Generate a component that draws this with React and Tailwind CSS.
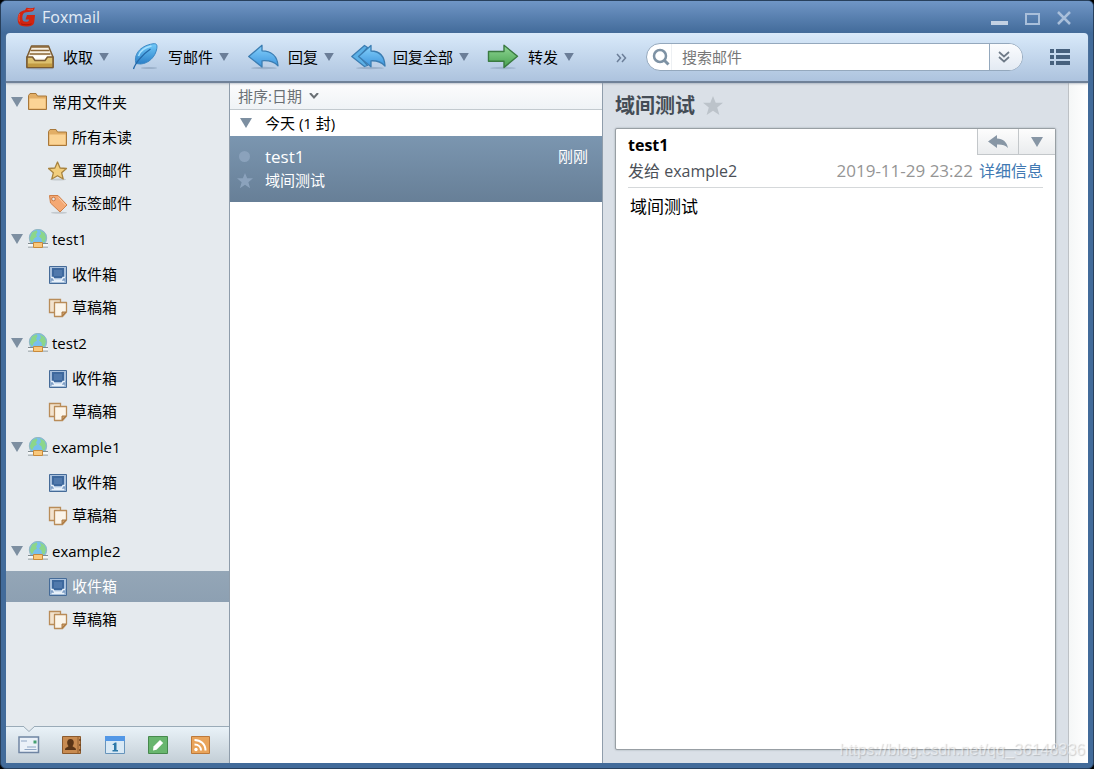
import { useState } from 'react'

const accounts = ['test1', 'test2', 'example1', 'example2']

/* ---------- small glyphs ---------- */

function Triangle({ className = '' }) {
  return (
    <svg viewBox="0 0 12 10" className={`shrink-0 ${className}`} aria-hidden="true">
      <path d="M0 0h12L6 10z" fill="currentColor" />
    </svg>
  )
}

function Star({ className = '' }) {
  return (
    <svg viewBox="0 0 20 20" className={`shrink-0 ${className}`} aria-hidden="true">
      <path d="M10 0l2.700 6.700H20l-5.800 4.900L16.400 19 10 14.800 3.600 19l2.200-7.400L0 6.700h7.300z" fill="currentColor" />
    </svg>
  )
}

function Logo() {
  return (
    <svg width="20" height="20" viewBox="0 0 20 20" className="shrink-0" aria-hidden="true">
      <path d="M18.800 .4c-.6 3-1.800 4-4.300 4.300l-4.300.5C7.200 5.600 6.300 7.500 6.300 10.800c0 3 1.200 4 3.700 4 2.200 0 3-.6 3-2.300H9.500L11 8h8l-.8 7.200c-.5 3-3.200 4.200-8.200 4.200-6 0-8.300-2-8.300-7.200C1.700 6.500 4.500 4 9 3.300l1.500-2.500c3 .6 6 .6 8.300-.4z" fill="#d2240f" />
      <path d="M3.700 7C2.700 9 2.700 12.500 3.500 14.500M11.500 2.500c2 .3 3.800.3 5.500-.3" stroke="#ec5a40" strokeWidth="1" fill="none" />
      <path d="M5 16.800c2 1.300 8 1.300 10.500 0" stroke="#a81808" fill="none" />
    </svg>
  )
}

/* ---------- toolbar icons ---------- */

function ReceiveIcon() {
  return (
    <svg width="42" height="32" viewBox="0 0 42 32" aria-hidden="true">
      <ellipse cx="19" cy="27.500" rx="14" ry="1.200" fill="#8fa5bf" opacity=".6" />
      <path d="M10.500 5h17l4.500 11v10H6V16z" fill="#f7f1e4" stroke="#7a5a30" strokeWidth="1.500" strokeLinejoin="round" />
      <path d="M10.500 6h17M9.500 9.500h19M8.500 13h21" stroke="#8a6535" strokeWidth="1.500" />
      <path d="M9.500 14.500h19l1.500 3H8z" fill="#fff" />
      <path d="M6 16h5.500l2.500 3.500h10l2.500-3.500H32v10.500H6z" fill="#dcc06e" stroke="#7a5a30" strokeWidth="1.500" strokeLinejoin="round" />
      <path d="M7 22.500h24V26H7z" fill="#c19a42" />
    </svg>
  )
}

function WriteIcon() {
  return (
    <svg width="42" height="32" viewBox="0 0 42 32" aria-hidden="true">
      <defs>
        <linearGradient id="feather" x1="0" y1="0" x2="0" y2="1">
          <stop offset="0" stopColor="#72cbfa" />
          <stop offset="1" stopColor="#2a7fc8" />
        </linearGradient>
      </defs>
      <ellipse cx="23" cy="27" rx="8" ry="1" fill="#8fa5bf" opacity=".7" />
      <path d="M10 22.500C7.500 14.500 13 5 27 2.800c3.700-.5 4.300 1 3.800 4.700C29.500 15.500 23 22.500 14.500 23z" fill="url(#feather)" stroke="#3a87c4" />
      <path d="M7.500 28c1.500-5 8-14 17-20" stroke="#2468a8" strokeWidth="1.300" fill="none" />
      <path d="M12.500 15c1.500-5 6.500-8.500 13-10" stroke="#a5e0ff" strokeWidth="1.500" fill="none" />
    </svg>
  )
}

function ReplyIcon() {
  return (
    <svg width="42" height="32" viewBox="0 0 42 32" aria-hidden="true">
      <defs>
        <linearGradient id="reply" x1="0" y1="0" x2="0" y2="1">
          <stop offset="0" stopColor="#86d2fc" />
          <stop offset="1" stopColor="#3b93dc" />
        </linearGradient>
      </defs>
      <ellipse cx="18" cy="27" rx="13" ry="1.200" fill="#8fa5bf" opacity=".7" />
      <path d="M2.700 15.500L16 4.300v5.500c9 .2 15.500 5 16 15-4-4.300-8.500-5.500-16-5v6.200z" fill="url(#reply)" stroke="#3b7db2" strokeWidth="1.300" strokeLinejoin="round" />
    </svg>
  )
}

function ReplyAllIcon() {
  return (
    <svg width="42" height="32" viewBox="0 0 42 32" aria-hidden="true">
      <ellipse cx="19" cy="27" rx="14" ry="1.200" fill="#8fa5bf" opacity=".7" />
      <path d="M.8 15.500L13.500 4.500l3 2-8 9 8 9-3 1z" fill="#5cb0e6" stroke="#3b7db2" strokeWidth="1.300" strokeLinejoin="round" />
      <path d="M7.500 15.500L20 4.500V10c8 .2 13.500 4.800 14 15-4-4.300-8-5.500-14-5.200v6z" fill="url(#reply)" stroke="#3b7db2" strokeWidth="1.300" strokeLinejoin="round" />
    </svg>
  )
}

function ForwardIcon() {
  return (
    <svg width="42" height="32" viewBox="0 0 42 32" aria-hidden="true">
      <defs>
        <linearGradient id="forward" x1="0" y1="0" x2="0" y2="1">
          <stop offset="0" stopColor="#90d795" />
          <stop offset="1" stopColor="#47a04f" />
        </linearGradient>
      </defs>
      <ellipse cx="17" cy="27" rx="13" ry="1.200" fill="#8fa5bf" opacity=".6" />
      <path d="M2.500 10.500H18V4.300l13.500 11L18 26.500v-6.200H2.500z" fill="url(#forward)" stroke="#3a7a41" strokeWidth="1.400" strokeLinejoin="round" />
    </svg>
  )
}

/* ---------- folder icons ---------- */

function FolderIcon() {
  return (
    <svg width="20" height="20" viewBox="0 0 20 20" className="shrink-0" aria-hidden="true">
      <path d="M.5 17.500v-14L2 1.500h6L9.500 4h9v13.500z" fill="#e2ae66" stroke="#a8783a" strokeLinejoin="round" />
      <path d="M1.500 6.500h16v10h-16z" fill="#fbd495" />
    </svg>
  )
}

function PinnedIcon() {
  return (
    <svg width="20" height="20" viewBox="0 0 20 20" className="shrink-0" aria-hidden="true">
      <ellipse cx="10" cy="18.500" rx="8" ry="1" fill="#c3c9ce" />
      <path d="M9.500 1l2.600 6 6.400.5-4.900 4.200 1.600 6.300-5.700-3.300L3.800 18l1.600-6.300L.5 7.500 6.900 7z" fill="#f2ce7d" stroke="#a9843f" strokeWidth="1.300" strokeLinejoin="round" />
    </svg>
  )
}

function TagIcon() {
  return (
    <svg width="20" height="20" viewBox="0 0 20 20" className="shrink-0" aria-hidden="true">
      <ellipse cx="11" cy="18.800" rx="8" ry="1" fill="#c3c9ce" />
      <path d="M1.500 1.500h8.500l9 9.500-7 7L2.500 9z" fill="#f4a873" stroke="#d07f47" strokeLinejoin="round" />
      <path d="M10.500 3.500l7 7.500" stroke="#fbd0ad" />
      <circle cx="5.500" cy="5" r="1.800" fill="#e5eaee" stroke="#c57a49" />
    </svg>
  )
}

function AccountIcon() {
  return (
    <svg width="20" height="20" viewBox="0 0 20 20" className="shrink-0" aria-hidden="true">
      <circle cx="10" cy="9" r="8.700" fill="#78bfec" stroke="#8aaeb8" strokeWidth=".8" />
      <path d="M4 3.500L8.500 1.200 9.500 3 8 5.500 9 7.500 6 9.500l-2 4L1.700 9.500zM12 1.500l4.500 2.500L18 8.500l-1.500 5-2.500-1-.5-3-2.500-2L13 5z" fill="#8cd68a" />
      <path d="M0 14.500h20M0 18h20" stroke="#7f898d" />
      <path d="M0 16.200h20" stroke="#f4f7f8" strokeWidth="2.400" />
      <path d="M5.500 13.500h9v5h-9z" fill="#f9c87b" stroke="#c98a3a" strokeLinejoin="round" />
    </svg>
  )
}

function InboxIcon() {
  return (
    <svg width="20" height="20" viewBox="0 0 20 20" className="shrink-0" aria-hidden="true">
      <path d="M1.500 1.500h17v17h-17z" fill="#a9c1dd" stroke="#456b98" />
      <path d="M4 3h12v10H4z" fill="#3d689d" />
      <path d="M6 5h8v6H6z" fill="#5079ac" />
      <path d="M2.500 12H5l1.500 2.500h7L15 12h2.500v5.500h-15z" fill="#7f9fc6" />
      <path d="M3 12.500h2L6.500 15h7l1.500-2.500h2M3.500 16.500h13" stroke="#e8f1fa" strokeWidth="1.300" fill="none" />
    </svg>
  )
}

function DraftIcon() {
  return (
    <svg width="20" height="20" viewBox="0 0 20 20" className="shrink-0" aria-hidden="true">
      <path d="M1.500 1.500h11v13h-11z" fill="#f2e3ce" stroke="#b98c58" strokeWidth="1.300" />
      <path d="M6.500 4.500h12v9.500l-4 4.500h-8z" fill="#fbf5ea" stroke="#b98c58" strokeWidth="1.300" strokeLinejoin="round" />
      <path d="M14 18v-4h4z" fill="#cf9f68" stroke="#a87843" strokeLinejoin="round" />
    </svg>
  )
}

/* ---------- bottom tab icons ---------- */

function MailTabIcon() {
  return (
    <svg width="22" height="20" viewBox="0 0 22 20" aria-hidden="true">
      <path d="M1 2h19.500v15.500H1z" fill="#eaf1f8" stroke="#6f85a3" strokeWidth="1.500" />
      <path d="M3 6h6M9 12h9M6.500 14.500h12" stroke="#8fa6c4" />
      <path d="M15.500 5.500h3v3h-3z" fill="#45a070" />
    </svg>
  )
}

function ContactsTabIcon() {
  return (
    <svg width="22" height="20" viewBox="0 0 22 20" aria-hidden="true">
      <path d="M1.500 1.500h18v17h-18z" fill="#c88b51" stroke="#8b5a2e" />
      <path d="M17 2v16" stroke="#96602f" />
      <path d="M18 5h2M18 10h2M18 15h2" stroke="#6e4420" strokeWidth="1.500" />
      <path d="M9.500 4c4 0 4 5 2 7 .5 1.500 3.500 1 3.500 4H4c0-3 3-2.500 3.500-4-2-2-2-7 2-7z" fill="#5a3517" />
    </svg>
  )
}

function CalendarTabIcon() {
  return (
    <svg width="22" height="20" viewBox="0 0 22 20" aria-hidden="true">
      <path d="M1.500 1.500h19v17h-19z" fill="#d9e9f5" stroke="#6794bb" />
      <path d="M1 1h20v5H1z" fill="#5297e6" />
      <path d="M8.500 9.500L11 7.500h1.500v7.500H14v1.500H8.500V15H10v-5H8.500z" fill="#2d78a8" />
    </svg>
  )
}

function NotesTabIcon() {
  return (
    <svg width="22" height="20" viewBox="0 0 22 20" aria-hidden="true">
      <path d="M1.500 1.500h19v17h-19z" fill="#68b66e" stroke="#46894d" />
      <path d="M6 15.500l.5-4L13 5l3.200 3-6.700 6.700z" fill="#fff" />
    </svg>
  )
}

function RssTabIcon() {
  return (
    <svg width="22" height="20" viewBox="0 0 22 20" aria-hidden="true">
      <path d="M1.500 1.500h18v17h-18z" fill="#e9a45b" stroke="#bd793a" />
      <path d="M4.500 5c6 0 11 4 11 10.500M4.500 9.500c4 0 6.500 2.500 6.500 6" stroke="#fff" strokeWidth="2" fill="none" />
      <circle cx="6" cy="14.500" r="1.700" fill="#fff" />
    </svg>
  )
}

const tools = [
  { label: '收取', icon: ReceiveIcon },
  { label: '写邮件', icon: WriteIcon },
  { label: '回复', icon: ReplyIcon },
  { label: '回复全部', icon: ReplyAllIcon },
  { label: '转发', icon: ForwardIcon },
]

const tabs = [
  { label: '邮件', icon: MailTabIcon },
  { label: '联系人', icon: ContactsTabIcon },
  { label: '日历', icon: CalendarTabIcon },
  { label: '便签', icon: NotesTabIcon },
  { label: 'RSS', icon: RssTabIcon },
]

const commonFolders = [
  { label: '所有未读', icon: FolderIcon },
  { label: '置顶邮件', icon: PinnedIcon },
  { label: '标签邮件', icon: TagIcon },
]

const accountFolders = [
  { label: '收件箱', icon: InboxIcon },
  { label: '草稿箱', icon: DraftIcon },
]

function TitleBar() {
  return (
    <header className="flex h-8 shrink-0 items-center bg-linear-to-b from-[#7096c6] to-[#426b9a] pr-[19px] pl-[15px] text-[#e3ecf6]">
      <Logo />
      <h1 className="ml-[6px] text-base leading-5">Foxmail</h1>
      <div className="ml-auto flex gap-3 text-[#a9bfda]">
        <button aria-label="最小化" className="flex size-5 items-center justify-center text-[#c3d1e3]">
          <svg width="20" height="20" viewBox="0 0 20 20"><path d="M1 14h17v4H1z" fill="currentColor" /></svg>
        </button>
        <button aria-label="最大化" className="flex size-5 items-center justify-center">
          <svg width="20" height="20" viewBox="0 0 20 20"><path d="M4 7h13v10H4z" fill="none" stroke="currentColor" strokeWidth="2" /></svg>
        </button>
        <button aria-label="关闭" className="flex size-5 items-center justify-center">
          <svg width="20" height="20" viewBox="0 0 20 20"><path d="M4 5l12 12M16 5L4 17" stroke="currentColor" strokeWidth="2.500" /></svg>
        </button>
      </div>
    </header>
  )
}

function Toolbar() {
  return (
    <div className="z-10 flex h-[50px] shrink-0 items-center rounded-t-sm border-b-2 border-[#6f8198] bg-linear-to-b from-[#d9eafa] to-[#adc3de] pr-[18px] pl-[15px] shadow-[0_1px_2px_#8c98a688]">
      <div className="flex gap-[17px]">
        {tools.map(({ label, icon: Icon }) => (
          <button key={label} className="flex items-center whitespace-nowrap">
            <Icon />
            <span>{label}</span>
            <Triangle className="ml-[6px] h-2 w-[10px] text-[#6b7e98]" />
          </button>
        ))}
      </div>
      <button aria-label="更多" className="ml-[42px] text-[#6b7e98]">
        <svg width="12" height="12" viewBox="0 0 12 12"><path d="M1 3l3.500 4L1 11M6 3l3.500 4L6 11" stroke="currentColor" strokeWidth="1.500" fill="none" /></svg>
      </button>
      <div className="ml-[18px] flex h-7 min-w-0 flex-1 items-center overflow-hidden rounded-full border border-[#94a8bd] bg-white">
        <label htmlFor="search" className="flex h-full w-[25px] shrink-0 items-center justify-center border-r border-[#edf0f3] pl-1">
          <svg width="20" height="20" viewBox="0 0 20 20" className="shrink-0">
            <circle cx="9" cy="9" r="6" fill="none" stroke="#7e92a4" strokeWidth="2.500" />
            <path d="M13 13l4.500 4.500" stroke="#7e92a4" strokeWidth="3" />
          </svg>
        </label>
        <input
          id="search"
          type="text"
          aria-label="搜索邮件"
          placeholder="搜索邮件"
          className="min-w-0 flex-1 pl-[10px] outline-none placeholder:text-[#777]"
        />
        <button aria-label="搜索选项" className="flex h-full w-[33px] items-center justify-center border-l border-[#94a8bd] bg-linear-to-b from-[#fbfcfe] to-[#e3eaf3] pr-1">
          <svg width="12" height="12" viewBox="0 0 12 12"><path d="M1 1l5 4.500L11 1M1 6l5 4.500L11 6" stroke="#6f7b88" strokeWidth="1.700" fill="none" /></svg>
        </button>
      </div>
      <button aria-label="视图" className="ml-[27px]">
        <svg width="20" height="16" viewBox="0 0 20 16" fill="#46607d">
          <path d="M0 0h4v4H0zM6 0h14v4H6zM0 6h4v4H0zM6 6h14v4H6zM0 12h4v4H0zM6 12h14v4H6z" />
        </svg>
      </button>
    </div>
  )
}

function FolderGroup({ title, icon: Icon, folders, selected, onSelect }) {
  return (
    <section className="last:pb-0">
      <button className="flex h-10 w-full items-center pl-[5px]">
        <Triangle className="h-[10px] w-3 text-[#7d8fa1]" />
        <span className="mr-1 ml-[5px]"><Icon /></span>
        <span>{title}</span>
      </button>
      <ul className="flex flex-col gap-[2px]">
        {folders.map(({ label, icon: FolderGlyph }) => {
          const id = `${title}/${label}`
          return (
            <li key={id}>
              <button
                onClick={() => onSelect(id)}
                className={`flex h-[31px] w-full items-center gap-1 pl-[42px] ${selected === id ? 'bg-linear-to-b from-[#94a6b7] to-[#8da0b2] text-white' : ''}`}
              >
                <FolderGlyph />
                <span>{label}</span>
              </button>
            </li>
          )
        })}
      </ul>
    </section>
  )
}

function Sidebar() {
  const [selected, setSelected] = useState('example2/收件箱')

  return (
    <aside className="flex w-56 shrink-0 flex-col border-r border-[#8f9dab] bg-[#e5eaee]">
      <nav className="-mt-px min-h-0 flex-1 overflow-hidden">
        <FolderGroup title="常用文件夹" icon={FolderIcon} folders={commonFolders} selected={selected} onSelect={setSelected} />
        {accounts.map((name) => (
          <FolderGroup key={name} title={name} icon={AccountIcon} folders={accountFolders} selected={selected} onSelect={setSelected} />
        ))}
      </nav>
      <div className="relative flex h-[37px] shrink-0 items-center gap-[21px] border-t border-[#9aabb8] bg-linear-to-b from-[#e9f2f8] to-[#c3ced6] pl-3">
        {/* notch pointing at the active tab */}
        <svg width="12" height="7" viewBox="0 0 12 7" className="absolute -top-px left-[17px]" aria-hidden="true">
          <path d="M0 0l6 5.500L12 0" fill="#e5eaee" stroke="#9aabb8" />
        </svg>
        {tabs.map(({ label, icon: Icon }) => (
          <button key={label} aria-label={label}><Icon /></button>
        ))}
      </div>
    </aside>
  )
}

function MessageList() {
  return (
    <section className="flex w-[373px] shrink-0 flex-col border-r border-[#8f9dab] bg-white">
      <button className="flex h-[27px] items-center border-b border-[#c3cacf] bg-linear-to-b from-[#fcfcfd] to-[#eff3f6] pl-2 text-[#6a7075]">
        排序:日期
        <svg width="10" height="6" viewBox="0 0 10 6" className="ml-[7px]"><path d="M1 0l4 4.500L9 0" stroke="#6a7075" strokeWidth="2" fill="none" /></svg>
      </button>
      <button className="flex h-[26px] items-center pl-[10px]">
        <Triangle className="mr-[13px] h-[10px] w-3 text-[#7d8fa1]" />
        今天 (1 封)
      </button>
      <ul>
        <li className="flex h-[66px] bg-linear-to-b from-[#7b96b0] to-[#677f97] pt-2 pr-[14px] pl-[6px] text-white">
          <div className="mr-3 flex w-[17px] flex-col items-center">
            <span className="mt-[7px] size-[11px] rounded-full bg-[#8ba2bc]" />
            <Star className="mt-[11px] size-4 text-[#8ba2bc]" />
          </div>
          <div className="flex-1">
            <div className="flex h-6 items-center justify-between">
              <span className="text-[17px]">test1</span>
              <span>刚刚</span>
            </div>
            <p className="flex h-6 items-center">域间测试</p>
          </div>
        </li>
      </ul>
    </section>
  )
}

function MessageView() {
  return (
    <main className="flex min-w-0 flex-1 flex-col bg-[#dae0e7] pr-3 pb-[13px] pl-3">
      <h2 className="flex h-[45px] shrink-0 items-center gap-2 text-xl font-bold text-[#444c55]">
        域间测试
        <Star className="size-5 text-[#bcc3ca]" />
      </h2>
      <article className="flex-1 rounded-xs border border-[#989fa4] bg-white shadow-[0_0_2px_#9aa2a9]">
        <div className="flex h-[26px] justify-between">
          <h3 className="flex items-center pt-[6px] pl-3 text-base font-bold">test1</h3>
          <div className="flex border-b border-l border-[#c3c7ca] bg-linear-to-b from-[#fdfdfd] to-[#eaecee] text-[#8796a5]">
            <button aria-label="回复" className="flex w-10 items-center justify-center">
              <svg width="20" height="16" viewBox="0 0 20 16"><path d="M0 7.500L9 1v3.500c6 .3 10 3.500 11 9.500-3-3-6-3.700-11-3.500V14z" fill="currentColor" /></svg>
            </button>
            <button aria-label="更多操作" className="flex w-[37px] items-center justify-center border-l border-[#c3c7ca]">
              <Triangle className="h-[10px] w-3" />
            </button>
          </div>
        </div>
        <div className="mx-3 flex h-[33px] items-center gap-[6px] border-b border-[#d5d8da] text-base text-[#4b5057]">
          <span className="mr-auto">发给 example2</span>
          <time className="text-[17px] text-[#959595]">2019-11-29 23:22</time>
          <a href="#details" className="text-[#4179b3]">详细信息</a>
        </div>
        <p className="px-[14px] pt-[5px] text-[17px] leading-7">域间测试</p>
      </article>
    </main>
  )
}

export default function App() {
  return (
    <div className="bg-black">
      <div className="relative flex h-screen flex-col overflow-hidden rounded-md border border-[#28405c] bg-[#426b9a] font-['Open_Sans','Noto_Sans_CJK_SC',sans-serif] text-[15px] leading-none text-black">
        <TitleBar />
        <div className="mx-[5px] mb-[5px] flex min-h-0 flex-1 flex-col">
          <Toolbar />
          <div className="flex min-h-0 flex-1">
            <Sidebar />
            <MessageList />
            <MessageView />
            <div className="w-5 shrink-0 border-l border-[#bdc1c5] bg-linear-to-r from-[#f5f7f7] to-white" />
          </div>
        </div>
        <span className="absolute right-2 bottom-[6px] font-['Liberation_Sans',sans-serif] text-base text-white/50 [text-shadow:1px_1px_1px_#77777755]">
          https://blog.csdn.net/qq_36148336
        </span>
      </div>
    </div>
  )
}
